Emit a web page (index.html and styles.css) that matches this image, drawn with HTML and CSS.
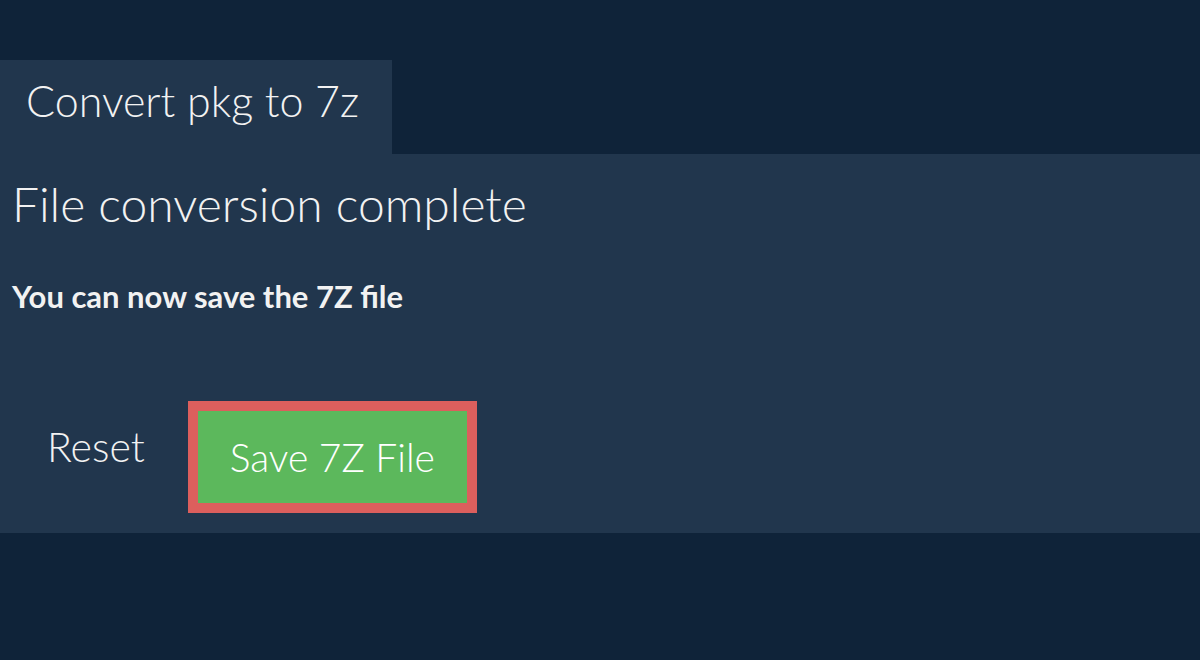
FILE: index.html
```html
<!DOCTYPE html>
<html>
<head>
<meta charset="utf-8">
<link rel="stylesheet" href="styles.css">
</head>
<body>
<div class="page">
  <div class="tab">Convert pkg to 7z</div>
  <div class="panel">
    <h1 class="title">File conversion complete</h1>
    <p class="sub">You can now save the 7Z file</p>
    <div class="actions">
      <button class="reset">Reset</button>
      <button class="save">Save 7Z File</button>
    </div>
  </div>
</div>
</body>
</html>
```
FILE: styles.css
```css
html, body {
  margin: 0;
  padding: 0;
  background: #0f2339;
  font-family: Lato, "Open Sans", sans-serif;
  color: #f2f2f2;
}
.page {
  padding-top: 60px;
}
.tab {
  display: inline-block;
  vertical-align: top;
  width: 392px;
  box-sizing: border-box;
  height: 94px;
  background: #21364d;
  padding: 0 0 0 26px;
  font-size: 43px;
  font-weight: 300;
  line-height: 81px;
}
.panel {
  background: #21364d;
  height: 379px;
  box-sizing: border-box;
  padding: 15px 12px 0;
}
.title {
  margin: 0;
  font-size: 48px;
  font-weight: 300;
  line-height: 70px;
}
.sub {
  margin: 37px 0 0;
  font-size: 31px;
  font-weight: 700;
  line-height: 40px;
}
.actions {
  display: flex;
  align-items: flex-start;
  margin-top: 85px;
  padding-left: 35px;
  gap: 43px;
}
.reset {
  background: none;
  border: none;
  color: #f2f2f2;
  font-family: inherit;
  font-size: 41px;
  font-weight: 300;
  line-height: normal;
  padding: 0;
  margin-top: 21px;
}
.save {
  background: #5cb85c;
  border: 10px solid #dc5f5d;
  color: #fff;
  font-family: inherit;
  font-size: 39px;
  font-weight: 300;
  line-height: normal;
  width: 289px;
  height: 112px;
  padding: 0;
}
```
